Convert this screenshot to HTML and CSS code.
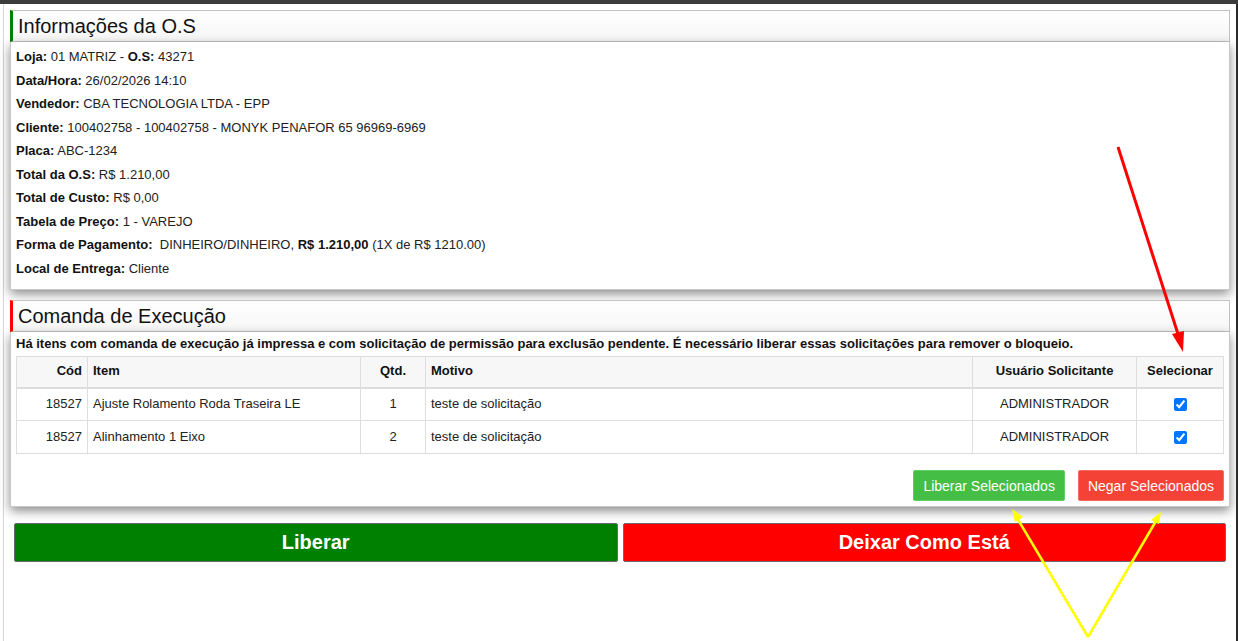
FILE: index.html
```html
<!DOCTYPE html>
<html lang="pt-BR">
<head>
    <meta charset="UTF-8">
    <meta name="viewport" content="width=device-width, initial-scale=1.0">
    <title>Informações da O.S</title>
    <link rel="stylesheet" href="styles.css">
</head>
<body>
    <div class="top-bar"></div>
    <div class="screen">
        <div class="modal">
            <div class="panel">
                <div class="panel-title title-green">Informações da O.S</div>
                <div class="panel-body info-body">
                    <div class="info-line"><b>Loja:</b> 01 MATRIZ - <b>O.S:</b> 43271</div>
                    <div class="info-line"><b>Data/Hora:</b> 26/02/2026 14:10</div>
                    <div class="info-line"><b>Vendedor:</b> CBA TECNOLOGIA LTDA - EPP</div>
                    <div class="info-line"><b>Cliente:</b> 100402758 - 100402758 - MONYK PENAFOR 65 96969-6969</div>
                    <div class="info-line"><b>Placa:</b> ABC-1234</div>
                    <div class="info-line"><b>Total da O.S:</b> R$ 1.210,00</div>
                    <div class="info-line"><b>Total de Custo:</b> R$ 0,00</div>
                    <div class="info-line"><b>Tabela de Preço:</b> 1 - VAREJO</div>
                    <div class="info-line"><b>Forma de Pagamento:</b>&nbsp; DINHEIRO/DINHEIRO, <b>R$ 1.210,00</b> (1X de R$ 1210.00)</div>
                    <div class="info-line"><b>Local de Entrega:</b> Cliente</div>
                </div>
            </div>

            <div class="panel panel-second">
                <div class="panel-title title-red">Comanda de Execução</div>
                <div class="panel-body">
                    <div class="warning">Há itens com comanda de execução já impressa e com solicitação de permissão para exclusão pendente. É necessário liberar essas solicitações para remover o bloqueio.</div>
                    <table class="items-table">
                        <colgroup>
                            <col style="width: 71px">
                            <col style="width: 273px">
                            <col style="width: 65px">
                            <col style="width: 547px">
                            <col style="width: 164px">
                            <col style="width: 87px">
                        </colgroup>
                        <thead>
                            <tr>
                                <th class="right">Cód</th>
                                <th>Item</th>
                                <th class="center">Qtd.</th>
                                <th>Motivo</th>
                                <th class="center">Usuário Solicitante</th>
                                <th class="center">Selecionar</th>
                            </tr>
                        </thead>
                        <tbody>
                            <tr>
                                <td class="right">18527</td>
                                <td>Ajuste Rolamento Roda Traseira LE</td>
                                <td class="center">1</td>
                                <td>teste de solicitação</td>
                                <td class="center">ADMINISTRADOR</td>
                                <td class="center"><input type="checkbox" checked></td>
                            </tr>
                            <tr>
                                <td class="right">18527</td>
                                <td>Alinhamento 1 Eixo</td>
                                <td class="center">2</td>
                                <td>teste de solicitação</td>
                                <td class="center">ADMINISTRADOR</td>
                                <td class="center"><input type="checkbox" checked></td>
                            </tr>
                        </tbody>
                    </table>
                    <div class="table-actions">
                        <button class="btn-small btn-green">Liberar Selecionados</button>
                        <button class="btn-small btn-red">Negar Selecionados</button>
                    </div>
                </div>
            </div>

            <div class="main-actions">
                <button class="btn-big big-green">Liberar</button>
                <button class="btn-big big-red">Deixar Como Está</button>
            </div>
        </div>
        <div class="side-strip"></div>
    </div>

    <svg class="annotations" width="1238" height="641" viewBox="0 0 1238 641">
        <line x1="1118" y1="147" x2="1178" y2="334" stroke="#ff0000" stroke-width="3"/>
        <polygon points="1183,352 1172,334 1184,331" fill="#ff0000"/>
        <line x1="1088" y1="637" x2="1017" y2="518" stroke="#ffff00" stroke-width="2.5"/>
        <polygon points="1012,509 1023,517 1015,522" fill="#ffff00"/>
        <line x1="1088" y1="637" x2="1156" y2="521" stroke="#ffff00" stroke-width="2.5"/>
        <polygon points="1161,512 1159,524 1151,520" fill="#ffff00"/>
    </svg>
</body>
</html>
```

FILE: styles.css
```css
* {
    box-sizing: border-box;
}

body {
    margin: 0;
    width: 1238px;
    height: 641px;
    overflow: hidden;
    position: relative;
    font-family: "Liberation Sans", Arial, sans-serif;
    font-size: 13px;
    color: #222;
    background: #fff;
}

.top-bar {
    height: 4px;
    background: #3c3c3c;
}

.screen {
    display: flex;
    height: 637px;
}

.modal {
    flex: 1;
    padding: 6px 6px 0 10px;
    background:
        linear-gradient(#d6d6d6, #d6d6d6) 3px 0 / 1px 100% no-repeat,
        #fff;
}

.side-strip {
    width: 3px;
    background: #2b2b2b;
}

.panel-title {
    height: 32px;
    padding-left: 5px;
    font-size: 20px;
    line-height: 30px;
    color: #111;
    border: 1px solid #c3c3c3;
    background: linear-gradient(#fff, #f6f6f6);
}

.title-green {
    border-left: 3px solid #008000;
}

.title-red {
    border-left: 3px solid #ff0000;
}

.panel-body {
    border: 1px solid #c8c8c8;
    border-top: none;
    background: #fff;
    padding: 0 5px 5px 5px;
    box-shadow: 0 4px 10px rgba(0, 0, 0, 0.45);
}

.info-body {
    padding-top: 3px;
    padding-bottom: 9px;
}

.info-line {
    line-height: 23.5px;
}

.info-line b {
    color: #111;
}

.panel-second {
    margin-top: 10px;
}

.warning {
    font-weight: bold;
    line-height: 24px;
    color: #111;
}

.items-table {
    width: 1207px;
    table-layout: fixed;
    border-collapse: collapse;
}

.items-table th,
.items-table td {
    border: 1px solid #dddddd;
    padding: 0 5px;
    text-align: left;
}

.items-table th {
    height: 31px;
    padding-bottom: 2px;
    background: #f7f7f7;
    border-bottom: 2px solid #dddddd;
    color: #111;
}

.items-table td {
    height: 33px;
    padding-bottom: 1px;
}

.items-table .right {
    text-align: right;
}

.items-table .center {
    text-align: center;
}

.items-table input {
    margin: 0;
    width: 13px;
    height: 13px;
    vertical-align: middle;
    accent-color: #0075ff;
}

.table-actions {
    display: flex;
    justify-content: flex-end;
    gap: 13px;
    margin-top: 16px;
}

.btn-small {
    height: 31px;
    padding: 0 9px;
    font-family: "Liberation Sans", Arial, sans-serif;
    font-size: 14px;
    color: #fff;
    border-radius: 2px;
    cursor: pointer;
}

.btn-green {
    background: #44be44;
    border: 1px solid #5fcf5f;
}

.btn-red {
    background: #f44336;
    border: 1px solid #f76a5f;
}

.main-actions {
    display: flex;
    gap: 5px;
    margin: 16px 4px 0 4px;
}

.btn-big {
    flex: 1;
    height: 39px;
    font-family: "Liberation Sans", Arial, sans-serif;
    font-size: 20px;
    font-weight: bold;
    color: #fff;
    border: 1px solid #6b6b6b;
    border-radius: 2px;
    cursor: pointer;
}

.big-green {
    background: #008000;
}

.big-red {
    background: #ff0000;
}

.annotations {
    position: absolute;
    left: 0;
    top: 0;
    pointer-events: none;
}
```
